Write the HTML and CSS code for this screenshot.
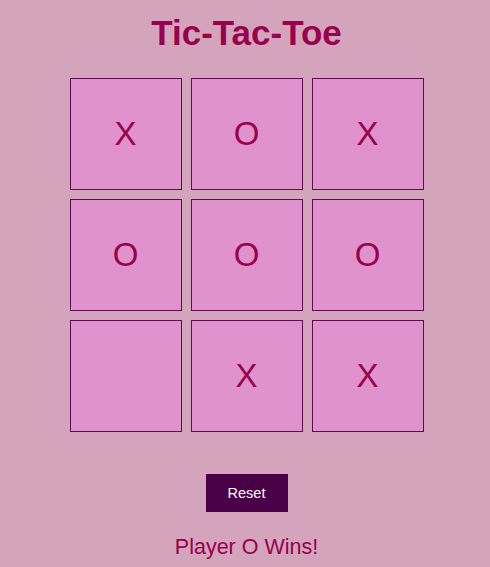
FILE: index.html
```html
<!DOCTYPE html>
<html lang="en">
<head>
<meta charset="utf-8">
<title>Tic-Tac-Toe</title>
<link rel="stylesheet" href="styles.css">
</head>
<body>
<main class="app">
  <h1 class="title">Tic-Tac-Toe</h1>
  <div class="board">
    <div class="cell">X</div>
    <div class="cell">O</div>
    <div class="cell">X</div>
    <div class="cell">O</div>
    <div class="cell">O</div>
    <div class="cell">O</div>
    <div class="cell"></div>
    <div class="cell">X</div>
    <div class="cell">X</div>
  </div>
  <button class="reset">Reset</button>
  <p class="status">Player O Wins!</p>
</main>
</body>
</html>
```
FILE: styles.css
```css
html, body {
  margin: 0;
  padding: 0;
  background: #d4a4bc;
  font-family: "Liberation Sans", Arial, sans-serif;
  color: #99004d;
}
.app {
  display: flex;
  flex-direction: column;
  align-items: center;
  padding: 13px 0 0 3px;
}
.title {
  margin: 0;
  font-size: 35px;
  line-height: 40px;
  font-weight: bold;
  color: #99004d;
}
.board {
  margin-top: 25px;
  display: grid;
  grid-template-columns: repeat(3, 112px);
  grid-auto-rows: 112px;
  gap: 9px;
}
.cell {
  box-sizing: border-box;
  border: 1px solid #5e0b55;
  background: #e092cc;
  display: flex;
  align-items: center;
  justify-content: center;
  font-size: 33px;
  color: #99004d;
}
.reset {
  margin-top: 42px;
  width: 82px;
  height: 38px;
  border: none;
  background: #4a0046;
  color: #ffffff;
  font-family: "Liberation Sans", Arial, sans-serif;
  font-size: 14.5px;
  padding: 0;
}
.status {
  margin: 22px 0 0;
  font-size: 21.5px;
  line-height: 26px;
  color: #99004d;
}
```
